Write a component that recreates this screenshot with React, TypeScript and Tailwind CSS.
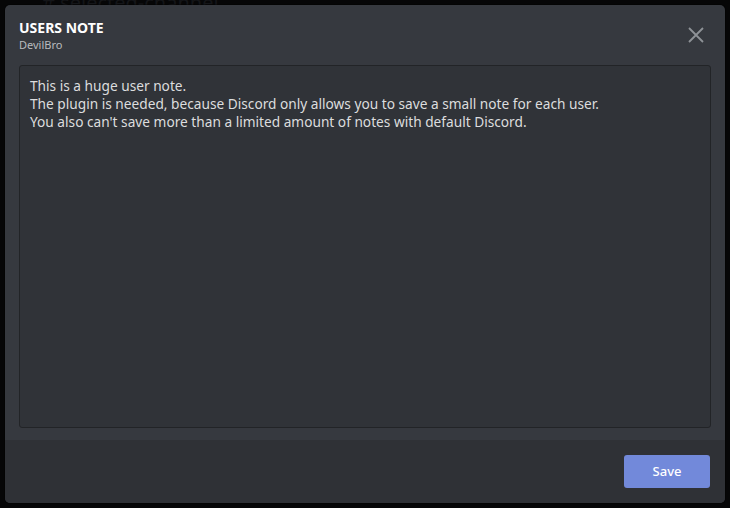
export default function App() {
  return (
    <div className="flex h-[508px] w-[730px] flex-col overflow-hidden bg-[#060607] font-['Noto_Sans',sans-serif]">
      <div className="flex h-[5px] shrink-0 items-end overflow-visible pl-[42px]">
        <span className="text-[20px] leading-[5px] text-[#141518]"># selected-channel</span>
      </div>
      <div className="flex flex-1 px-[5px] pb-[5px]">
        <div className="flex w-[720px] flex-col overflow-hidden rounded-[5px] bg-[#36393f] shadow-[0_0_0_1px_rgba(0,0,0,0.3)]">
          <div className="flex items-start justify-between pl-[14px] pr-[21px] pt-[13px]">
            <div className="flex flex-col">
              <h2 className="text-[14px] font-bold uppercase leading-[19px] text-white">Users Note</h2>
              <span className="mt-[1px] text-[11px] leading-[14px] text-[#b9bbbe]">DevilBro</span>
            </div>
            <button className="mt-[9px] text-[#8e9297]">
              <svg width="16" height="16" viewBox="0 0 16 16" fill="none">
                <path d="M1 1L15 15M15 1L1 15" stroke="currentColor" strokeWidth="1.8" />
              </svg>
            </button>
          </div>
          <div className="mx-[14px] mt-[13px] h-[363px] rounded-[3px] border border-[#222427] bg-[#303338] px-[10px] pb-[8px] pt-[11px] text-[13.7px] leading-[18px] text-[#dcddde]">
            <p>This is a huge user note.</p>
            <p>The plugin is needed, because Discord only allows you to save a small note for each user.</p>
            <p>You also can't save more than a limited amount of notes with default Discord.</p>
          </div>
          <div className="mt-[12px] flex flex-1 items-start justify-end bg-[#2f3136] pr-[15px] pt-[15px]">
            <button className="h-[33px] w-[86px] rounded-[3px] bg-[#7289da] text-[13px] font-medium text-white">
              Save
            </button>
          </div>
        </div>
      </div>
    </div>
  );
}
